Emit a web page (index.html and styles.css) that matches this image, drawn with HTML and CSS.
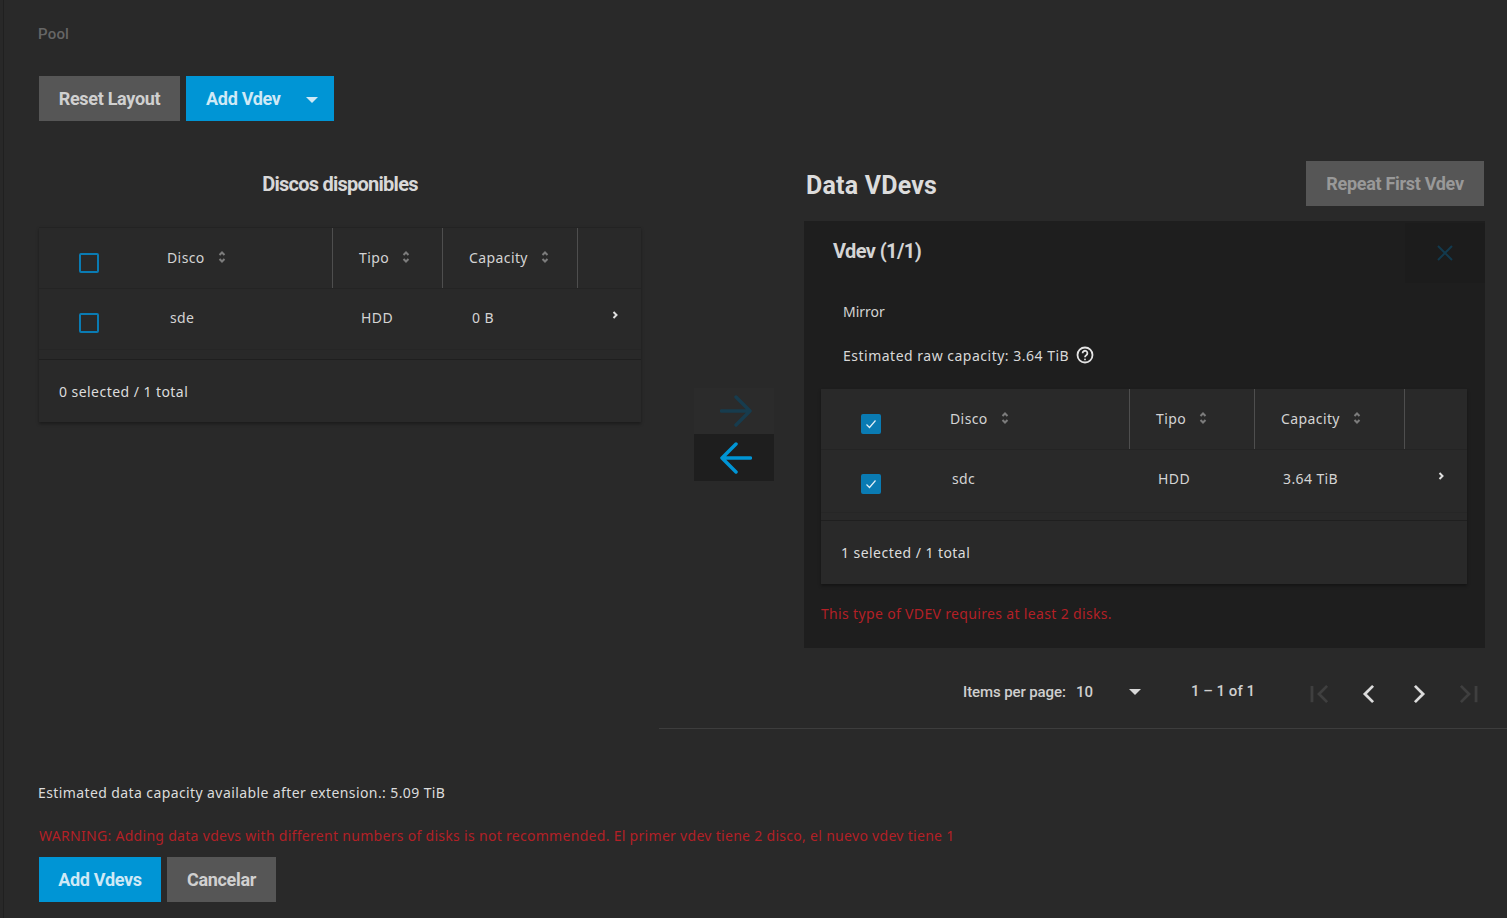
FILE: index.html
```html
<!DOCTYPE html>
<html lang="en">
<head>
<meta charset="utf-8">
<title>Pool</title>
<link rel="stylesheet" href="styles.css">
</head>
<body>
<div class="page">
  <div class="pool-label">Pool</div>
  <div class="toolbar">
    <button class="btn btn-grey btn-reset">Reset Layout</button>
    <button class="btn btn-blue btn-add">Add Vdev<span class="caret"></span></button>
  </div>
  <div class="workspace">
    <section class="left-col">
      <h2 class="left-title">Discos disponibles</h2>
      <div class="table table-left">
        <div class="row head">
          <div class="cell c-name"><span class="check"></span><span class="label l-disco">Disco</span><svg class="sort" viewBox="0 0 8 14"><path d="M1.500 5L4 2.500 6.500 5M1.500 9L4 11.500 6.500 9"/></svg></div>
          <div class="cell c-type"><span class="label">Tipo</span><svg class="sort" viewBox="0 0 8 14"><path d="M1.500 5L4 2.500 6.500 5M1.500 9L4 11.500 6.500 9"/></svg></div>
          <div class="cell c-cap"><span class="label">Capacity</span><svg class="sort" viewBox="0 0 8 14"><path d="M1.500 5L4 2.500 6.500 5M1.500 9L4 11.500 6.500 9"/></svg></div>
          <div class="cell c-end"></div>
        </div>
        <div class="row body">
          <div class="cell c-name"><span class="check"></span><span class="label l-val">sde</span></div>
          <div class="cell c-type"><span class="label l-val2">HDD</span></div>
          <div class="cell c-cap"><span class="label l-val2">0 B</span></div>
          <div class="cell c-end"><svg class="chev" viewBox="0 0 8 10"><path d="M2.500 2l3 3-3 3"/></svg></div>
        </div>
        <div class="spacer"></div>
        <div class="foot">0 selected / 1 total</div>
      </div>
    </section>

    <div class="arrows">
      <div class="arrow arrow-off"><svg viewBox="0 0 32 32"><path d="M1.500 16H30M16 2l14 14-14 14"/></svg></div>
      <div class="arrow arrow-on"><svg viewBox="0 0 32 32"><path d="M30.500 16H2M16 2L2 16l14 14"/></svg></div>
    </div>

    <section class="right-col">
      <div class="right-head">
        <h2 class="right-title">Data VDevs</h2>
        <button class="btn btn-grey btn-repeat">Repeat First Vdev</button>
      </div>
      <div class="vdev">
        <div class="vdev-top">
          <div class="vdev-title">Vdev (1/1)</div>
          <div class="close"><svg viewBox="0 0 18 18"><path d="M2 2l14 14M16 2L2 16"/></svg></div>
        </div>
        <div class="vdev-type">Mirror</div>
        <div class="vdev-cap">Estimated raw capacity: 3.64 TiB
          <svg class="help" viewBox="0 0 18 18"><circle cx="9" cy="9" r="7.500"/><path d="M6.600 7.200a2.400 2.400 0 1 1 3.700 2c-.9.6-1.300 1-1.300 2"/><circle class="dot" cx="9" cy="13.400" r=".9"/></svg>
        </div>
        <div class="table table-right">
          <div class="row head">
            <div class="cell c-name"><span class="check on"><svg viewBox="0 0 20 20"><path d="M5.500 10.500l3 3 6-7"/></svg></span><span class="label l-disco">Disco</span><svg class="sort" viewBox="0 0 8 14"><path d="M1.500 5L4 2.500 6.500 5M1.500 9L4 11.500 6.500 9"/></svg></div>
            <div class="cell c-type"><span class="label">Tipo</span><svg class="sort" viewBox="0 0 8 14"><path d="M1.500 5L4 2.500 6.500 5M1.500 9L4 11.500 6.500 9"/></svg></div>
            <div class="cell c-cap"><span class="label">Capacity</span><svg class="sort" viewBox="0 0 8 14"><path d="M1.500 5L4 2.500 6.500 5M1.500 9L4 11.500 6.500 9"/></svg></div>
            <div class="cell c-end"></div>
          </div>
          <div class="row body">
            <div class="cell c-name"><span class="check on"><svg viewBox="0 0 20 20"><path d="M5.500 10.500l3 3 6-7"/></svg></span><span class="label l-val">sdc</span></div>
            <div class="cell c-type"><span class="label l-val2">HDD</span></div>
            <div class="cell c-cap"><span class="label l-val2">3.64 TiB</span></div>
            <div class="cell c-end"><svg class="chev" viewBox="0 0 8 10"><path d="M2.500 2l3 3-3 3"/></svg></div>
          </div>
          <div class="spacer"></div>
          <div class="foot">1 selected / 1 total</div>
        </div>
        <div class="vdev-error">This type of VDEV requires at least 2 disks.</div>
      </div>
      <div class="paginator">
        <span class="pg-label">Items per page:</span>
        <span class="pg-size">10</span>
        <span class="caret caret-pg"></span>
        <span class="pg-range">1 – 1 of 1</span>
        <svg class="pg-icon dim" viewBox="0 0 24 24"><path d="M5.500 4.500v15M19.500 4.500L12 12l7.500 7.500"/></svg>
        <svg class="pg-icon" viewBox="0 0 24 24"><path d="M15.750 4.500L8.250 12l7.500 7.500"/></svg>
        <svg class="pg-icon" viewBox="0 0 24 24"><path d="M8.250 4.500l7.500 7.500-7.500 7.500"/></svg>
        <svg class="pg-icon dim" viewBox="0 0 24 24"><path d="M18.500 4.500v15M4.500 4.500L12 12l-7.500 7.500"/></svg>
      </div>
    </section>
  </div>
  <div class="rule"></div>
  <div class="estimate">Estimated data capacity available after extension.: 5.09 TiB</div>
  <div class="warning">WARNING: Adding data vdevs with different numbers of disks is not recommended. El primer vdev tiene 2 disco, el nuevo vdev tiene 1</div>
  <div class="actions">
    <button class="btn btn-blue btn-addv">Add Vdevs</button>
    <button class="btn btn-grey btn-cancel">Cancelar</button>
  </div>
</div>
</body>
</html>
```
FILE: styles.css
```css
* { box-sizing: border-box; }
html, body { margin: 0; height: 100%; }
body {
  background: #282828;
  color: #d8d8d8;
  font-family: "Noto Sans", "Liberation Sans", sans-serif;
  font-size: 14px;
  overflow: hidden;
}
.page {
  height: 918px;
  margin-left: 3px;
  border-left: 1px solid #202020;
  padding-left: 35px;
  background: #292929;
}
.pool-label {
  padding-top: 25px;
  height: 76px;
  margin-left: -1px;
  color: #666;
  font-family: Roboto, sans-serif;
  font-size: 15px;
  font-weight: 500;
  line-height: 19px;
  letter-spacing: .2px;
}
.toolbar { display: flex; gap: 6px; }
.btn {
  border: 0;
  border-radius: 0;
  height: 45px;
  padding: 0;
  font-family: Roboto, "Liberation Sans", sans-serif;
  font-size: 18px;
  font-weight: 700;
  letter-spacing: -0.3px;
  display: inline-flex;
  align-items: center;
  justify-content: center;
}
.btn-grey { background: #565656; color: #d0d0d0; }
.btn-blue { background: #0095d5; color: #cfe9f6; }
.btn-reset { width: 141px; }
.btn-add { width: 148px; justify-content: flex-start; padding-left: 20px; }
.caret {
  width: 0; height: 0;
  border-left: 6.5px solid transparent;
  border-right: 6.5px solid transparent;
  border-top: 6.5px solid #cfe9f6;
}
.btn-add .caret { margin-left: 25px; margin-top: 3px; }

.workspace { display: flex; height: 607px; }
.left-col { width: 602px; }
.left-title {
  margin: 0;
  height: 106px;
  padding-top: 50px;
  text-align: center;
  font-family: Roboto, sans-serif;
  font-size: 20px;
  font-weight: 700;
  line-height: 26px;
  letter-spacing: -0.75px;
  color: #d8d8d8;
}
.table {
  background: #292929;
  box-shadow: 0 2px 3px rgba(0,0,0,.35);
  border-top: 1px solid #232323;
}
.row { display: flex; }
.row.head { height: 61px; border-bottom: 1px solid #242424; }
.row.body { height: 61px; border-bottom: 1px solid #262626; }
.cell { display: flex; align-items: flex-start; position: relative; }
.head .cell { border-right: 1px solid #4e4e4e; }
.head .c-end { border-right: 0; }
.table-left .c-name { width: 294px; }
.table-left .c-type { width: 110px; }
.table-left .c-cap { width: 135px; }
.table-left .c-end { width: 63px; }
.table-right .c-name { width: 309px; }
.table-right .c-type { width: 125px; }
.table-right .c-cap { width: 150px; }
.table-right .c-end { width: 62px; }
.check {
  display: block;
  width: 20px; height: 20px;
  margin: 25px 0 0 40px;
  border: 2px solid #0a7bb3;
  border-radius: 2px;
  flex: none;
}
.row.body .check { margin-top: 24px; }
.check.on { background: #0a7bb3; }
.check svg { display: block; width: 20px; height: 20px; margin: -2px; fill: none; stroke: #e0eef6; stroke-width: 1.2; }
.label { display: block; line-height: 20px; margin-top: 20px; margin-left: 26px; font-size: 14px; letter-spacing: .4px; white-space: nowrap; color: #d4d4d4; }
.l-disco { margin-left: 68px; }
.table-right .l-disco { margin-left: 69px; }
.l-val { margin-left: 71px; margin-top: 19px; }
.l-val2 { margin-left: 29px; margin-top: 19px; }
.c-type .l-val2, .table-right .c-cap .l-val2 { margin-left: 28px; }
.sort { width: 8px; height: 14px; margin: 22px 0 0 13px; fill: none; stroke: #7c7c7c; stroke-width: 2; flex: none; }
.chev { width: 8px; height: 10px; margin: 21px 0 0 33px; fill: none; stroke: #e0e0e0; stroke-width: 2; }
.spacer { height: 10px; border-bottom: 1px solid #1f1f1f; }
.foot { height: 62px; padding: 22px 0 0 20px; line-height: 19px; letter-spacing: .45px; color: #dcdcdc; }
.table-right { border-top: 0; }
.table-right .row.body { height: 63px; }
.table-right .spacer { height: 8px; }
.table-right .foot { height: 63px; }
.table-right .chev { margin-left: 32px; }

.arrows { width: 80px; margin: 267px 30px 0 53px; flex: none; }
.arrow { display: flex; align-items: center; justify-content: center; }
.arrow svg { width: 32px; height: 32px; margin-left: 4px; fill: none; stroke-width: 3.5; stroke-linecap: round; stroke-linejoin: round; }
.arrow-off { height: 46px; background: #2b2b2b; }
.arrow-off svg { stroke: #173c4e; }
.arrow-on { height: 47px; background: #1e1e1e; }
.arrow-on svg { stroke: #0095d5; }

.right-col { width: 681px; flex: none; }
.right-head { display: flex; justify-content: space-between; height: 145px; padding-top: 40px; }
.right-title {
  margin: 3px 0 0 2px;
  font-family: Roboto, sans-serif;
  font-size: 25px;
  font-weight: 700;
  line-height: 44px;
  letter-spacing: .2px;
  color: #dcdcdc;
}
.btn-repeat { width: 178px; color: #999; margin-right: 1px; }
.vdev { background: #1e1e1e; height: 427px; margin-top: -45px; padding: 0 18px 0 17px; }
.vdev-top { display: flex; justify-content: space-between; height: 71px; margin: 0 -18px 0 0; padding-left: 12px; }
.vdev-title { font-family: Roboto, sans-serif; font-size: 20px; font-weight: 700; line-height: 26px; margin-top: 17px; letter-spacing: -0.6px; color: #d4d4d4; }
.close { width: 80px; height: 60px; background: #1c1c1c; display: flex; align-items: center; justify-content: center; margin-top: 2px; }
.close svg { width: 18px; height: 18px; fill: none; stroke: #123a4e; stroke-width: 2; }
.vdev-type { margin-left: 22px; height: 44px; line-height: 19px; padding-top: 10px; color: #d4d4d4; }
.vdev-cap { margin-left: 22px; height: 53px; line-height: 19px; padding-top: 10px; letter-spacing: .5px; color: #d8d8d8; display: flex; gap: 7px; }
.help { width: 18px; height: 18px; fill: none; stroke: #e4e4e4; stroke-width: 1.8; }
.help .dot { fill: #e4e4e4; stroke: none; }
.vdev-error { color: #b32026; margin-top: 20px; line-height: 19px; letter-spacing: .34px; }

.paginator { display: flex; align-items: center; height: 80px; padding: 8px 0 0 159px; color: #cfcfcf; font-size: 14px; }
.pg-label { font-family: Roboto, sans-serif; font-size: 15px; font-weight: 500; width: 103px; white-space: nowrap; letter-spacing: -.1px; flex: none; }
.pg-size { margin: -1px 0 0 10px; width: 52px; font-family: Roboto, sans-serif; font-size: 15px; font-weight: 500; flex: none; }
.caret-pg { border-top-color: #d8d8d8; flex: none; margin-left: 1px; }
.pg-range { margin: -2px 52px 0 50px; width: 63px; font-family: Roboto, sans-serif; font-size: 15px; font-weight: 500; white-space: nowrap; flex: none; }
.pg-icon { width: 26px; height: 26px; margin: 4px 24px 0 0; fill: none; stroke: #dcdcdc; stroke-width: 2.6; flex: none; }
.pg-icon.dim { stroke: #3f3f3f; }

.rule { height: 1px; background: #3d3d3d; margin-left: 620px; }
.estimate { margin-top: 54px; margin-left: -1px; line-height: 19px; letter-spacing: .4px; color: #dcdcdc; }
.warning { margin-top: 24px; line-height: 19px; letter-spacing: .3px; color: #b32026; white-space: nowrap; }
.actions { display: flex; gap: 6px; margin-top: 12px; }
.btn-addv { width: 122px; }
.btn-cancel { width: 109px; }
```
